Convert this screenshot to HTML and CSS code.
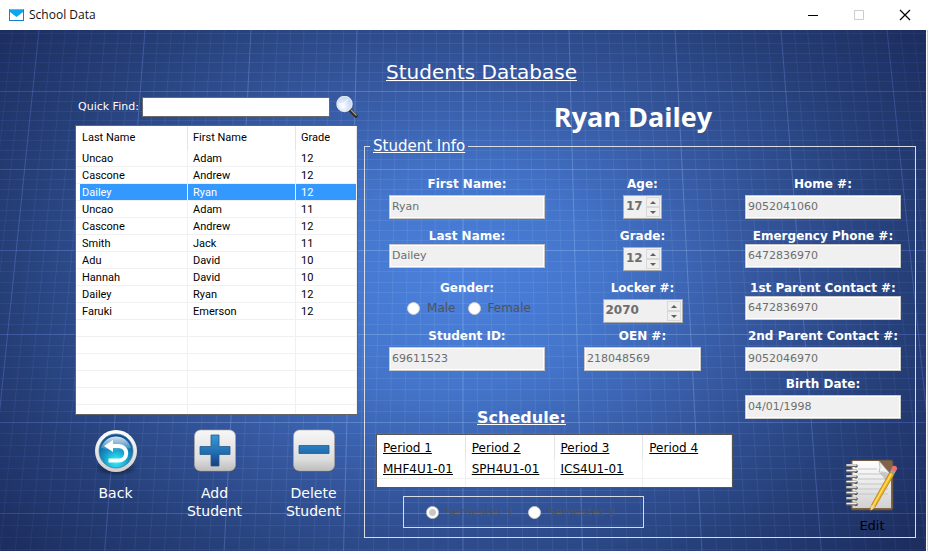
FILE: index.html
```html
<!DOCTYPE html>
<html lang="en">
<head>
<meta charset="utf-8">
<title>School Data</title>
<link rel="stylesheet" href="styles.css">
</head>
<body>
<header class="titlebar">
  <svg class="app-icon" viewBox="0 0 15 12" aria-hidden="true">
    <rect width="15" height="12" fill="#1583c6"/>
    <path d="M1 1H14V11H1Z" fill="#fff"/>
    <path d="M1 1H14V3L7.500 8L1 3Z" fill="#0aa7ee"/>
    <path d="M0 0H15V1H0Z" fill="#4cc3f5"/>
    <path d="M.5 .5V11.500H14.500V.5" fill="none" stroke="#1583c6"/>
  </svg>
  <span class="window-title">School Data</span>
  <div class="window-buttons">
    <button type="button" aria-label="Minimize"><svg viewBox="0 0 10 10"><path d="M0 5.500H10" stroke="#000"/></svg></button>
    <button type="button" aria-label="Maximize" disabled><svg viewBox="0 0 10 10"><path d="M.5 .5H9.500V9.500H.5Z" stroke="#ccc" fill="none"/></svg></button>
    <button type="button" aria-label="Close"><svg viewBox="0 0 10 10"><path d="M0 0L10 10M10 0L0 10" stroke="#000" stroke-width="1.200"/></svg></button>
  </div>
</header>
<main class="client">
  <svg class="blueprint" viewBox="0 0 926 521" preserveAspectRatio="none" aria-hidden="true">
    <defs>
      <radialGradient id="glow" gradientUnits="userSpaceOnUse" cx="0" cy="0" r="1" gradientTransform="translate(455 255) scale(590 410)">
        <stop offset="0" stop-color="#4b80dc"/>
        <stop offset=".25" stop-color="#4475cb"/>
        <stop offset=".5" stop-color="#3658a0"/>
        <stop offset=".75" stop-color="#264079"/>
        <stop offset="1" stop-color="#1c2d5e"/>
      </radialGradient>
      <radialGradient id="ink" gradientUnits="userSpaceOnUse" cx="0" cy="0" r="1" gradientTransform="translate(455 255) scale(560 420)">
        <stop offset="0" stop-color="#90c4f2"/>
        <stop offset=".5" stop-color="#7da2dc"/>
        <stop offset="1" stop-color="#4b5cc0"/>
      </radialGradient>
    </defs>
    <rect width="926" height="521" fill="url(#glow)"/>
    <path id="minor" class="grid-minor"/>
    <path id="major" class="grid-major"/>
  </svg>
  <h1 class="page-title">Students Database</h1>
  <div class="columns">
    <section class="browser">
      <div class="find">
        <label for="find">Quick Find:</label>
        <input id="find" type="text">
        <svg class="lens" viewBox="0 0 22 22" aria-hidden="true">
          <defs><radialGradient id="glass" cx=".4" cy=".65" r=".7"><stop offset="0" stop-color="#fff"/><stop offset="1" stop-color="#b9cdf5"/></radialGradient></defs>
          <path d="M14 14L20 20" stroke="#292929" stroke-width="3.500" stroke-linecap="round"/>
          <path d="M15 14L20.500 19.500" stroke="#a99e85" stroke-width="1.200"/>
          <circle cx="8.500" cy="8" r="7.500" fill="url(#glass)" stroke="#dfe5ee" stroke-width="1.500"/>
          <path d="M3 8Q8 9 12 3" stroke="#fff" fill="none"/>
        </svg>
      </div>
      <table class="students">
        <colgroup><col class="c-last"><col class="c-first"><col class="c-grade"></colgroup>
        <thead><tr><th>Last Name</th><th>First Name</th><th>Grade</th></tr></thead>
        <tbody>
          <tr><td>Uncao</td><td>Adam</td><td>12</td></tr>
          <tr><td>Cascone</td><td>Andrew</td><td>12</td></tr>
          <tr class="selected"><td>Dailey</td><td>Ryan</td><td>12</td></tr>
          <tr><td>Uncao</td><td>Adam</td><td>11</td></tr>
          <tr><td>Cascone</td><td>Andrew</td><td>12</td></tr>
          <tr><td>Smith</td><td>Jack</td><td>11</td></tr>
          <tr><td>Adu</td><td>David</td><td>10</td></tr>
          <tr><td>Hannah</td><td>David</td><td>10</td></tr>
          <tr><td>Dailey</td><td>Ryan</td><td>12</td></tr>
          <tr><td>Faruki</td><td>Emerson</td><td>12</td></tr>
          <tr><td></td><td></td><td></td></tr>
          <tr><td></td><td></td><td></td></tr>
          <tr><td></td><td></td><td></td></tr>
          <tr><td></td><td></td><td></td></tr>
          <tr><td></td><td></td><td></td></tr>
          <tr class="stub"><td></td><td></td><td></td></tr>
        </tbody>
      </table>
      <div class="actions">
        <button type="button" class="action">
          <svg viewBox="0 0 44 44" aria-hidden="true">
            <defs>
              <linearGradient id="rim" x2="0" y2="1"><stop offset="0" stop-color="#fff"/><stop offset="1" stop-color="#cfcfcf"/></linearGradient>
              <radialGradient id="orb" cx=".5" cy=".8" r=".75"><stop offset="0" stop-color="#38f3fb"/><stop offset=".5" stop-color="#1596c8"/><stop offset="1" stop-color="#0b4f94"/></radialGradient>
              <linearGradient id="shine" x2="0" y2="1"><stop offset="0" stop-color="#fff" stop-opacity=".85"/><stop offset="1" stop-color="#fff" stop-opacity=".1"/></linearGradient>
              <radialGradient id="shade"><stop offset="0" stop-color="#000" stop-opacity=".7"/><stop offset="1" stop-color="#000" stop-opacity="0"/></radialGradient>
            </defs>
            <ellipse cx="22" cy="39" rx="22" ry="8" fill="url(#shade)"/>
            <circle cx="22" cy="22" r="21" fill="url(#rim)"/>
            <circle cx="22" cy="22" r="17" fill="url(#orb)" stroke="#4e7c9c" stroke-width=".8"/>
            <path d="M7 19A15.500 15.500 0 0 1 37 19Q22 23 7 19Z" fill="url(#shine)"/>
            <path d="M15 17H25A7 7 0 0 1 25 31.500H14.500" fill="none" stroke="#fff" stroke-width="4"/>
            <path d="M10 17L19 11V23Z" fill="#fff"/>
          </svg>
          <span>Back</span>
        </button>
        <button type="button" class="action">
          <svg viewBox="0 0 44 44" aria-hidden="true">
            <defs>
              <linearGradient id="tile" x2="0" y2="1"><stop offset="0" stop-color="#f6f6f6"/><stop offset=".7" stop-color="#dedede"/><stop offset="1" stop-color="#bdbdbd"/></linearGradient>
              <linearGradient id="blue" gradientUnits="userSpaceOnUse" x1="0" y1="6" x2="0" y2="37"><stop offset="0" stop-color="#3a97d4"/><stop offset=".5" stop-color="#2374b6"/><stop offset="1" stop-color="#173f82"/></linearGradient>
            </defs>
            <rect x="1.500" y="2" width="41" height="41" rx="6" fill="#3d4658"/>
            <rect x="1.500" y="1" width="41" height="41" rx="6" fill="url(#tile)" stroke="#aaa" stroke-width=".6"/>
            <path d="M18 6H26V17.500H37V25.500H26V37H18V25.500H7V17.500H18Z" fill="url(#blue)" stroke="#275b88" stroke-width=".8"/>
          </svg>
          <span>Add<br>Student</span>
        </button>
        <button type="button" class="action">
          <svg viewBox="0 0 44 44" aria-hidden="true">
            <rect x="1.500" y="2" width="41" height="41" rx="6" fill="#3d4658"/>
            <rect x="1.500" y="1" width="41" height="41" rx="6" fill="url(#tile)" stroke="#aaa" stroke-width=".6"/>
            <path d="M7 16.500H37V24.500H7Z" fill="url(#blue)" stroke="#275b88" stroke-width=".8"/>
          </svg>
          <span>Delete<br>Student</span>
        </button>
      </div>
    </section>
    <section class="record">
      <h2 class="student-name">Ryan Dailey</h2>
      <fieldset class="info">
        <legend>Student Info</legend>
        <div class="info-body">
          <div class="info-main">
            <div class="field-pair">
              <div class="fields">
                <div class="field"><label for="first">First Name:</label><input id="first" type="text" value="Ryan" disabled></div>
                <div class="field tight"><label for="last">Last Name:</label><input id="last" type="text" value="Dailey" disabled></div>
                <div class="field" role="radiogroup" aria-labelledby="gender-label">
                  <span class="caption" id="gender-label">Gender:</span>
                  <div class="choices gender">
                    <label><input type="radio" name="gender" disabled>Male</label>
                    <label><input type="radio" name="gender" disabled>Female</label>
                  </div>
                </div>
                <div class="field"><label for="sid">Student ID:</label><input id="sid" type="text" value="69611523" disabled></div>
              </div>
              <div class="fields">
                <div class="field"><label for="age">Age:</label>
                  <div class="spinner"><input id="age" type="text" value="17" disabled><span class="steps"><button type="button" aria-label="Increase age" disabled></button><button type="button" aria-label="Decrease age" disabled></button></span></div></div>
                <div class="field"><label for="grade">Grade:</label>
                  <div class="spinner"><input id="grade" type="text" value="12" disabled><span class="steps"><button type="button" aria-label="Increase grade" disabled></button><button type="button" aria-label="Decrease grade" disabled></button></span></div></div>
                <div class="field"><label for="locker">Locker #:</label>
                  <div class="spinner wide"><input id="locker" type="text" value="2070" disabled><span class="steps"><button type="button" aria-label="Increase locker" disabled></button><button type="button" aria-label="Decrease locker" disabled></button></span></div></div>
                <div class="field oen"><label for="oen">OEN #:</label><input id="oen" type="text" value="218048569" disabled></div>
              </div>
            </div>
            <h3 class="schedule-title">Schedule:</h3>
            <table class="schedule">
              <thead><tr><th>Period 1</th><th>Period 2</th><th>Period 3</th><th>Period 4</th></tr></thead>
              <tbody>
                <tr><td>MHF4U1-01</td><td>SPH4U1-01</td><td>ICS4U1-01</td><td></td></tr>
                <tr class="stub"><td></td><td></td><td></td><td></td></tr>
              </tbody>
            </table>
            <div class="choices semester" role="radiogroup" aria-label="Semester">
              <label><input type="radio" name="semester" checked disabled>Semester 1</label>
              <label><input type="radio" name="semester" disabled>Semester 2</label>
            </div>
          </div>
          <div class="info-side">
            <div class="fields">
              <div class="field"><label for="home">Home #:</label><input id="home" type="text" value="9052041060" disabled></div>
              <div class="field tight"><label for="emergency">Emergency Phone #:</label><input id="emergency" type="text" value="6472836970" disabled></div>
              <div class="field tight"><label for="parent1">1st Parent Contact #:</label><input id="parent1" type="text" value="6472836970" disabled></div>
              <div class="field"><label for="parent2">2nd Parent Contact #:</label><input id="parent2" type="text" value="9052046970" disabled></div>
              <div class="field"><label for="birth">Birth Date:</label><input id="birth" type="text" value="04/01/1998" disabled></div>
            </div>
            <button type="button" class="edit">
              <svg viewBox="0 0 52 54" aria-hidden="true">
                <defs>
                  <linearGradient id="paper" x2="0" y2="1"><stop offset="0" stop-color="#fff"/><stop offset="1" stop-color="#d2d2d2"/></linearGradient>
                </defs>
                <rect x="5" y="1" width="42" height="50" rx="2" fill="#80654a" stroke="#5c4935" stroke-width=".8"/>
                <path d="M6.500 2H33L45 16V49H6.500Z" fill="url(#paper)"/>
                <path d="M12 10H31M12 15H36M12 20H42M12 25H42M12 30H42M12 35H42" stroke="#c3c5c8" stroke-width="1.200"/>
                <path d="M33 2Q35 9 33 13Q39 12 45 16Z" fill="#f3f3f3" stroke="#aaa" stroke-width=".7"/>
                <path d="M34 14Q40 13 44 17L42 24Z" fill="#999" opacity=".5"/>
                <g fill="#333"><circle cx="10" cy="7" r="1.600"/><circle cx="10" cy="12.500" r="1.600"/><circle cx="10" cy="18" r="1.600"/><circle cx="10" cy="23.500" r="1.600"/><circle cx="10" cy="29" r="1.600"/><circle cx="10" cy="34.500" r="1.600"/><circle cx="10" cy="40" r="1.600"/><circle cx="10" cy="45.500" r="1.600"/></g>
                <path d="M1 6.500H10M1 12H10M1 17.500H10M1 23H10M1 28.500H10M1 34H10M1 39.500H10M1 45H10" stroke="#6a6a6a" stroke-width="3" stroke-linecap="round"/>
                <path d="M1 6H10M1 11.500H10M1 17H10M1 22.500H10M1 28H10M1 33.500H10M1 39H10M1 44.500H10" stroke="#eee" stroke-width="1.500" stroke-linecap="round"/>
                <path d="M24 52L25.500 46L44 13L48 15.500L29 48Z" fill="#f5b417" stroke="#a87312" stroke-width=".7"/>
                <path d="M27 47L45.500 14.500" stroke="#ffe36a" stroke-width="1.300"/>
                <path d="M24 52.500L25.500 46L29 48Z" fill="#f1d6a4"/>
                <path d="M24 52.500L24.500 50.500L25.700 51.200Z" fill="#222"/>
                <path d="M44 13L46 9.500L50 12L48 15.500Z" fill="#9aa6aa"/>
                <circle cx="48.300" cy="9.500" r="2.700" fill="#ee7365"/>
              </svg>
              <span>Edit</span>
            </button>
          </div>
        </div>
      </fieldset>
    </section>
  </div>
</main>
<script src="grid.js"></script>
</body>
</html>
```
FILE: grid.js
```js
// Blueprint grid: vertical lines fan out from the top, rows grow taller downwards.
const minor = [];
const major = [];
for (let k = -40; k <= 40; k++) {
  const line = `M${463 + k * 13.25} 0L${463 + k * 14.93} 521`;
  (k % 8 === 0 ? major : minor).push(line);
}
const rows = [-16, 61, 139, 220, 304, 392, 483, 578];
for (let i = 0; i < rows.length - 1; i++) {
  for (let j = 0; j < 8; j++) {
    const y = Math.round(rows[i] + (rows[i + 1] - rows[i]) * j / 8) + 0.5;
    (j === 0 ? major : minor).push(`M0 ${y}H926`);
  }
}
document.getElementById("minor").setAttribute("d", minor.join(""));
document.getElementById("major").setAttribute("d", major.join(""));
```
FILE: styles.css
```css
* { box-sizing: border-box; }

body {
  margin: 0;
  min-height: 100vh;
  display: flex;
  flex-direction: column;
  background: #fff;
  color: #fff;
  font: 12px/16px "DejaVu Sans", sans-serif;
}

button, input { font: inherit; color: inherit; }
button { padding: 0; border: 0; background: none; }
h1, h2, h3 { margin: 0; }
table { border-collapse: separate; border-spacing: 0; table-layout: fixed; }

/* Title bar */
.titlebar {
  display: flex;
  align-items: center;
  height: 30px;
  padding-left: 9px;
  color: #111;
}
.app-icon { width: 15px; height: 12px; }
.window-title { margin-left: 5px; font: 12px/16px "Open Sans", sans-serif; }
.window-buttons { display: flex; margin-left: auto; }
.window-buttons button { display: grid; place-items: center; width: 46px; height: 28px; }
.window-buttons svg { width: 10px; height: 10px; overflow: visible; }

/* Client area */
.client {
  position: relative;
  flex: 1;
  margin: 0 2px 2px 0;
  padding: 30px 10px 12px 75px;
  box-shadow: 1px 0 #fff, 2px 0 #ccc;
}
.blueprint { position: absolute; inset: 0; width: 100%; height: 100%; z-index: -1; }
.grid-minor, .grid-major { fill: none; stroke: url(#ink); }
.grid-minor { opacity: .16; }
.grid-major { opacity: .45; }

.page-title {
  padding-right: 28px;
  text-align: center;
  font-weight: 400;
  font-size: 20px;
  line-height: 24px;
  text-decoration: underline;
  text-decoration-thickness: 1px;
}
.columns { display: grid; grid-template-columns: 283px minmax(0, 1fr); column-gap: 6px; }

/* Student list */
.find { display: flex; align-items: center; margin-top: 12px; height: 22px; font-size: 11px; padding-left: 3px; }
.find input {
  flex: 1;
  min-width: 0;
  height: 20px;
  margin: 0 6px 0 3px;
  border: 1px solid #6a6a6a;
  background: #fff;
  color: #000;
}
.lens { width: 22px; height: 22px; }

.students {
  width: 100%;
  margin-top: 7px;
  border: 1px solid #646464;
  background: #fff;
  color: #000;
  font: 11px/14px Roboto, sans-serif;
}
.c-last { width: 112px; }
.c-first { width: 108px; }
.students th { height: 24px; padding: 0 5px; border-right: 1px solid #e5e5e5; text-align: left; font-weight: 400; }
.students td { height: 17px; padding: 2px 5px 0; border: solid #f0f0f0; border-width: 0 1px 1px 0; }
.students th:first-child, .students td:first-child { padding-left: 6px; }
.students .stub td { height: 9px; border-bottom: 0; }
.students .selected td { background: #39f; color: #fff; }
.students .selected td:first-child { background: linear-gradient(to right, #fff 4px, #39f 4px); }

.actions { display: flex; justify-content: space-between; align-items: flex-start; margin-top: 14px; padding: 0 16px 0 12px; }
.action { display: flex; flex-direction: column; align-items: center; min-width: 57px; font-size: 14px; line-height: 18px; }
.action svg { width: 44px; height: 44px; margin-bottom: 11px; overflow: visible; }

/* Record */
.student-name { margin-top: 13px; padding-right: 14px; text-align: center; font: 700 27px/39px "Open Sans", sans-serif; }
.info { margin: 0; min-width: 0; padding: 20px 14px 3px 11px; border: 1px solid #d9dce3; }
.info legend { margin-left: -6px; padding: 0 3px; font-size: 15px; line-height: 20px; text-decoration: underline; text-decoration-thickness: 1px; }
.info-body { display: grid; grid-template-columns: minmax(0, 357fr) minmax(0, 156fr); column-gap: 12px; }
.field-pair { display: grid; grid-template-columns: minmax(0, 156fr) minmax(0, 171fr); column-gap: 12px; padding: 0 5px 0 13px; }
.fields { display: grid; grid-template-rows: 52px 52px 48px 48px; grid-auto-rows: 48px; }
.field { display: flex; flex-direction: column; align-items: center; gap: 3px; }
.field.tight { gap: 0; }
.field > label, .caption { font-weight: 700; font-size: 12px; line-height: 16px; white-space: nowrap; }
.field > input {
  width: 100%;
  height: 24px;
  padding: 0 2px 2px;
  border: 1px solid #c8c8c8;
  box-shadow: inset 0 0 0 1px #fff;
  background: #f0f0f0;
  color: #6d6d6d;
  font-size: 11px;
}
.field.oen > input { width: 117px; }

.spinner {
  display: flex;
  width: 39px;
  height: 24px;
  padding: 1px;
  border: 1px solid #ababab;
  background: #f0f0f0;
}
.spinner.wide { width: 80px; }
.spinner input { flex: 1; min-width: 0; padding: 0 0 2px 1px; border: 0; background: none; color: #6d6d6d; font-weight: 700; }
.steps { display: grid; width: 14px; }
.steps button { display: grid; place-items: center; border: 1px solid #d9d9d9; }
.steps button::before { content: ""; border: solid transparent; border-width: 0 3px 3px; border-bottom-color: #606060; }
.steps button:last-child::before { border-width: 3px 3px 0; border-top-color: #606060; }

/* Radio groups */
.choices { display: flex; align-items: center; color: #4e535c; }
.choices label { display: flex; align-items: center; gap: 7px; }
.choices input {
  appearance: none;
  width: 13px;
  height: 13px;
  margin: 0;
  border: 1px solid #ccc;
  border-radius: 50%;
  background: #fff;
}
.choices input:checked { background: radial-gradient(#c8c8c8 3px, #fff 4px); }
.gender { gap: 12px; padding: 1px 0 0 4px; }
.semester { gap: 14px; height: 32px; margin: 8px 89px 0 27px; padding-left: 22px; border: 1px solid #d9dce3; }
.semester label { gap: 6px; white-space: nowrap; }

/* Schedule */
.schedule-title { margin-top: 32px; padding-right: 66px; text-align: center; font-size: 16px; line-height: 20px; text-decoration: underline; text-decoration-thickness: 1px; }
.schedule { width: 100%; margin-top: 6px; border: 1px solid #555; background: #fff; color: #000; }
.schedule th { height: 24px; padding: 1px 6px 0; border-right: 1px solid #e5e5e5; text-align: left; font-weight: 400; }
.schedule td { height: 20px; padding: 1px 6px 0; border: solid #f0f0f0; border-width: 0 1px 1px 0; }
.schedule th, .schedule td { text-decoration: underline; white-space: nowrap; }
.schedule .stub td { height: 8px; border-bottom: 0; }

.edit { display: flex; flex-direction: column; align-items: center; margin: 35px 3px 0 auto; color: #000; font-size: 13px; }
.edit svg { width: 52px; height: 54px; margin-bottom: 5px; }
```
